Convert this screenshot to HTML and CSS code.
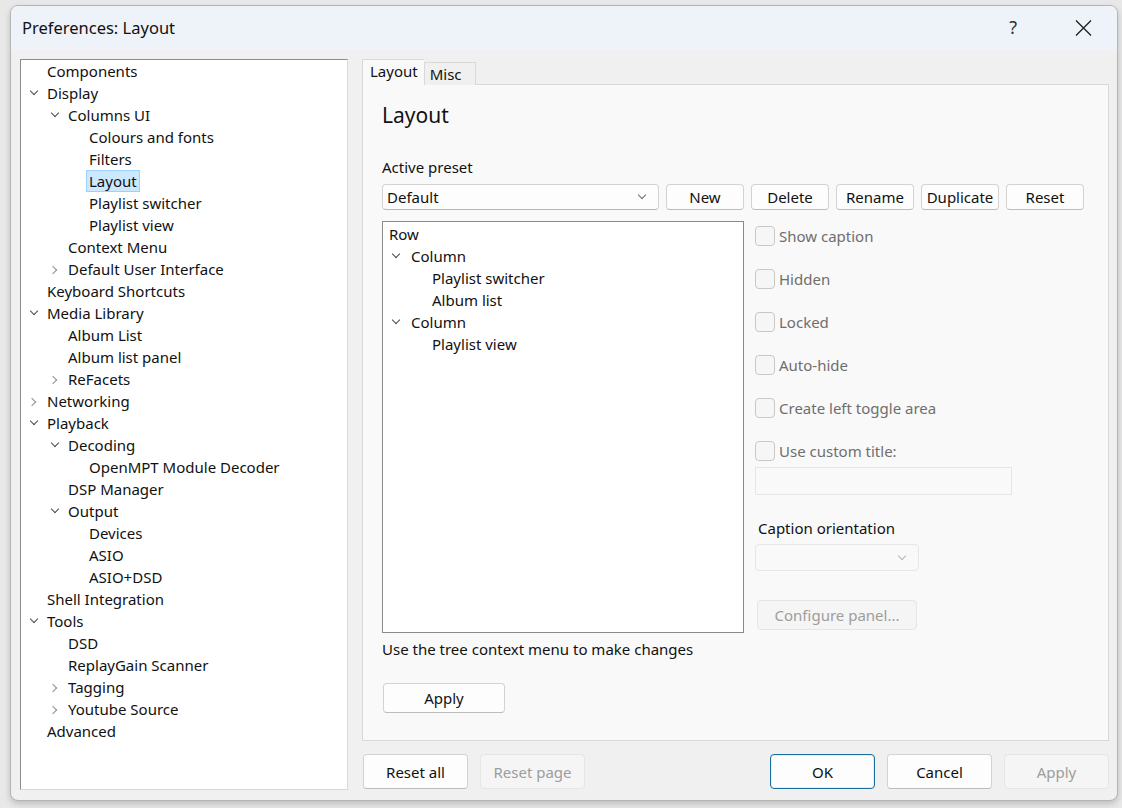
FILE: index.html
```html
<!DOCTYPE html>
<html lang="en">

<head>
<meta charset="UTF-8">
<meta name="viewport" content="width=device-width, initial-scale=1.0">
<title>Preferences: Layout</title>
<link rel="stylesheet" href="styles.css">
</head>

<body>

<div class="window">
    <div class="titlebar">
        <span class="title">Preferences: Layout</span>
        <span class="help-btn">?</span>
        <svg class="close-btn" width="17" height="16" viewBox="0 0 17 16">
            <path d="M1 0.5 L16 15.5 M16 0.5 L1 15.5" stroke="#1f1f1f" stroke-width="1.3" fill="none"/>
        </svg>
    </div>

    <div class="dialog-body">
        <!-- Preferences page tree -->
        <div class="page-tree">
            <div class="node lvl0"><span class="twisty"></span><span class="label">Components</span></div>
            <div class="node lvl0"><span class="twisty open"></span><span class="label">Display</span></div>
            <div class="node lvl1"><span class="twisty open"></span><span class="label">Columns UI</span></div>
            <div class="node lvl2"><span class="twisty"></span><span class="label">Colours and fonts</span></div>
            <div class="node lvl2"><span class="twisty"></span><span class="label">Filters</span></div>
            <div class="node lvl2"><span class="twisty"></span><span class="label selected">Layout</span></div>
            <div class="node lvl2"><span class="twisty"></span><span class="label">Playlist switcher</span></div>
            <div class="node lvl2"><span class="twisty"></span><span class="label">Playlist view</span></div>
            <div class="node lvl1"><span class="twisty"></span><span class="label">Context Menu</span></div>
            <div class="node lvl1"><span class="twisty closed"></span><span class="label">Default User Interface</span></div>
            <div class="node lvl0"><span class="twisty"></span><span class="label">Keyboard Shortcuts</span></div>
            <div class="node lvl0"><span class="twisty open"></span><span class="label">Media Library</span></div>
            <div class="node lvl1"><span class="twisty"></span><span class="label">Album List</span></div>
            <div class="node lvl1"><span class="twisty"></span><span class="label">Album list panel</span></div>
            <div class="node lvl1"><span class="twisty closed"></span><span class="label">ReFacets</span></div>
            <div class="node lvl0"><span class="twisty closed"></span><span class="label">Networking</span></div>
            <div class="node lvl0"><span class="twisty open"></span><span class="label">Playback</span></div>
            <div class="node lvl1"><span class="twisty open"></span><span class="label">Decoding</span></div>
            <div class="node lvl2"><span class="twisty"></span><span class="label">OpenMPT Module Decoder</span></div>
            <div class="node lvl1"><span class="twisty"></span><span class="label">DSP Manager</span></div>
            <div class="node lvl1"><span class="twisty open"></span><span class="label">Output</span></div>
            <div class="node lvl2"><span class="twisty"></span><span class="label">Devices</span></div>
            <div class="node lvl2"><span class="twisty"></span><span class="label">ASIO</span></div>
            <div class="node lvl2"><span class="twisty"></span><span class="label">ASIO+DSD</span></div>
            <div class="node lvl0"><span class="twisty"></span><span class="label">Shell Integration</span></div>
            <div class="node lvl0"><span class="twisty open"></span><span class="label">Tools</span></div>
            <div class="node lvl1"><span class="twisty"></span><span class="label">DSD</span></div>
            <div class="node lvl1"><span class="twisty"></span><span class="label">ReplayGain Scanner</span></div>
            <div class="node lvl1"><span class="twisty closed"></span><span class="label">Tagging</span></div>
            <div class="node lvl1"><span class="twisty closed"></span><span class="label">Youtube Source</span></div>
            <div class="node lvl0"><span class="twisty"></span><span class="label">Advanced</span></div>
        </div>

        <div class="page-area">
            <div class="tabs">
                <div class="tab active">Layout</div>
                <div class="tab">Misc</div>
            </div>

            <div class="tab-page">
                <h1 class="page-title">Layout</h1>

                <div class="field-label">Active preset</div>
                <div class="preset-row">
                    <div class="combo">
                        <span class="combo-text">Default</span>
                        <span class="combo-arrow"></span>
                    </div>
                    <button class="btn">New</button>
                    <button class="btn">Delete</button>
                    <button class="btn">Rename</button>
                    <button class="btn">Duplicate</button>
                    <button class="btn">Reset</button>
                </div>

                <div class="layout-grid">
                    <!-- Layout tree -->
                    <div class="layout-tree">
                        <div class="node lvl0"><span class="twisty"></span><span class="label">Row</span></div>
                        <div class="node lvl1"><span class="twisty open"></span><span class="label">Column</span></div>
                        <div class="node lvl2"><span class="twisty"></span><span class="label">Playlist switcher</span></div>
                        <div class="node lvl2"><span class="twisty"></span><span class="label">Album list</span></div>
                        <div class="node lvl1"><span class="twisty open"></span><span class="label">Column</span></div>
                        <div class="node lvl2"><span class="twisty"></span><span class="label">Playlist view</span></div>
                    </div>

                    <!-- Panel options (disabled) -->
                    <div class="panel-options">
                        <label class="check"><span class="box"></span>Show caption</label>
                        <label class="check"><span class="box"></span>Hidden</label>
                        <label class="check"><span class="box"></span>Locked</label>
                        <label class="check"><span class="box"></span>Auto-hide</label>
                        <label class="check"><span class="box"></span>Create left toggle area</label>
                        <label class="check"><span class="box"></span>Use custom title:</label>
                        <div class="text-field"></div>
                        <div class="caption-label">Caption orientation</div>
                        <div class="combo disabled"><span class="combo-text"></span><span class="combo-arrow"></span></div>
                        <button class="btn disabled configure-btn">Configure panel...</button>
                    </div>
                </div>

                <div class="hint">Use the tree context menu to make changes</div>
                <button class="btn apply-btn">Apply</button>
            </div>

            <div class="footer">
                <button class="btn wide">Reset all</button>
                <button class="btn wide disabled">Reset page</button>
                <span class="spacer"></span>
                <button class="btn wide default">OK</button>
                <button class="btn wide">Cancel</button>
                <button class="btn wide disabled">Apply</button>
            </div>
        </div>
    </div>
</div>

</body>

</html>
```

FILE: styles.css
```css
body {
    margin: 0;
    padding: 5px 4px 7px 10px;
    background-color: #e8e8e8;
    font-family: "Noto Sans", sans-serif;
    font-size: 15px;
    color: #111111;
}

.window {
    width: 1106px;
    height: 794px;
    border: 1px solid #b4b4b4;
    border-radius: 8px;
    background-color: #f0f0f0;
    box-shadow: 0 3px 6px rgba(0, 0, 0, 0.18);
    overflow: hidden;
    display: flex;
    flex-direction: column;
}

/* Title bar */

.titlebar {
    height: 44px;
    background-color: #eef3f9;
    display: flex;
    align-items: center;
    padding: 0 25px 0 11px;
}

.title {
    font-size: 16.5px;
    flex: 1;
    margin-top: -2px;
}

.help-btn {
    font-size: 18px;
    color: #333333;
    margin-right: 58px;
    margin-top: -2px;
}

/* Body */

.dialog-body {
    flex: 1;
    display: flex;
    gap: 14px;
    padding: 9px 8px 10px 9px;
}

.page-tree {
    width: 326px;
    background-color: #ffffff;
    border: 1px solid #8c8c8c;
    border-right-color: #d8d8d8;
    border-bottom-color: #d8d8d8;
}

.node {
    display: flex;
    align-items: center;
    height: 22px;
    white-space: nowrap;
}

.page-tree .node {
    padding-left: 7px;
}

.page-tree .node.lvl1 {
    padding-left: 28px;
}

.page-tree .node.lvl2 {
    padding-left: 49px;
}

.twisty {
    width: 19px;
    height: 22px;
    flex-shrink: 0;
    position: relative;
}

.twisty.open::before,
.twisty.closed::before {
    content: "";
    position: absolute;
    width: 5px;
    height: 5px;
    border-right: 1px solid #4a4a4a;
    border-bottom: 1px solid #4a4a4a;
}

.twisty.open::before {
    left: 3px;
    top: 6px;
    transform: rotate(45deg);
}

.twisty.closed::before {
    left: 1px;
    top: 9px;
    border-color: #8e8e8e;
    transform: rotate(-45deg);
}

.label.selected {
    background-color: #cce8ff;
    border: 1px solid #99d1ff;
    height: 20px;
    line-height: 20px;
    padding: 0 2px;
    margin-left: -3px;
}

/* Tabs */

.page-area {
    width: 747px;
    display: flex;
    flex-direction: column;
    padding-top: 1px;
}

.tabs {
    display: flex;
    align-items: flex-end;
    height: 25px;
    margin-bottom: -1px;
    position: relative;
    z-index: 1;
}

.tab {
    height: 22px;
    line-height: 23px;
    padding: 0 13px 0 5px;
    border: 1px solid #d9d9d9;
    border-bottom: none;
    background-color: #f0f0f0;
}

.tab.active {
    height: 25px;
    line-height: 23px;
    padding: 0 6px 0 7px;
    background-color: #f9f9f9;
    border-right: none;
}

.tab-page {
    height: 657px;
    border: 1px solid #d9d9d9;
    background-color: #f9f9f9;
    padding: 15px 0 0 19px;
    box-sizing: border-box;
}

.page-title {
    margin: 0;
    font-size: 21px;
    font-weight: normal;
    line-height: 30px;
}

.field-label {
    margin-top: 27px;
    line-height: 20px;
}

.preset-row {
    display: flex;
    gap: 7px;
    margin-top: 7px;
    height: 26px;
}

.combo {
    width: 277px;
    height: 26px;
    box-sizing: border-box;
    border: 1px solid #d3d3d3;
    border-bottom-color: #b8b8b8;
    border-radius: 4px;
    background-color: #fdfdfd;
    display: flex;
    align-items: center;
    padding: 0 6px 0 4px;
}

.combo-text {
    flex: 1;
}

.combo-arrow {
    width: 5px;
    height: 5px;
    border-right: 1px solid #6a6a6a;
    border-bottom: 1px solid #6a6a6a;
    transform: rotate(45deg);
    margin: 0 7px 4px 0;
}

.btn {
    font-family: inherit;
    font-size: 15px;
    color: #111111;
    width: 78px;
    height: 26px;
    padding: 0;
    border: 1px solid #d3d3d3;
    border-bottom-color: #bcbcbc;
    border-radius: 4px;
    background-color: #fdfdfd;
}

.btn.disabled {
    color: #9d9d9d;
    background-color: #f5f5f5;
    border-color: #e5e5e5;
}

/* Layout tree + options */

.layout-grid {
    display: flex;
    gap: 11px;
    margin-top: 11px;
}

.layout-tree {
    width: 360px;
    height: 409px;
    background-color: #ffffff;
    border: 1px solid #8a8a8a;
    padding-top: 1px;
}

.layout-tree .node {
    padding-left: 6px;
}

.layout-tree .node.lvl1 {
    padding-left: 7px;
}

.layout-tree .node.lvl2 {
    padding-left: 28px;
}

.layout-tree .node.lvl0 .twisty {
    display: none;
}

.layout-tree .node.lvl1 .twisty,
.layout-tree .node.lvl2 .twisty {
    width: 21px;
}

.panel-options {
    display: flex;
    flex-direction: column;
    align-items: flex-start;
    padding-top: 4px;
}

.check {
    display: flex;
    align-items: center;
    height: 22px;
    margin-bottom: 21px;
    color: #6e6e6e;
}

.check:nth-child(6) {
    margin-bottom: 5px;
}

.box {
    width: 18px;
    height: 18px;
    border: 1px solid #c8c8c8;
    border-radius: 4px;
    background-color: #f6f6f6;
    margin-right: 4px;
}

.text-field {
    width: 255px;
    height: 26px;
    border: 1px solid #e6e6e6;
    background-color: #f9f9f9;
}

.caption-label {
    margin-top: 23px;
    margin-left: 3px;
    line-height: 20px;
}

.combo.disabled {
    width: 164px;
    height: 27px;
    margin-top: 6px;
    border-color: #e6e6e6;
    background-color: #f9f9f9;
}

.combo.disabled .combo-arrow {
    border-color: #b4b4b4;
}

.configure-btn {
    width: 160px;
    height: 30px;
    margin: 29px 0 0 2px;
}

.hint {
    margin-top: 6px;
    line-height: 20px;
}

.apply-btn {
    width: 122px;
    height: 30px;
    margin-top: 24px;
    margin-left: 1px;
}

/* Footer buttons */

.footer {
    display: flex;
    gap: 12px;
    margin-top: 13px;
    padding-left: 1px;
}

.btn.wide {
    width: 105px;
    height: 35px;
}

.spacer {
    flex: 1;
}

.btn.default {
    border: 1px solid #1b6ca1;
    box-shadow: inset 0 0 0 1px #e3eef6;
}
```
